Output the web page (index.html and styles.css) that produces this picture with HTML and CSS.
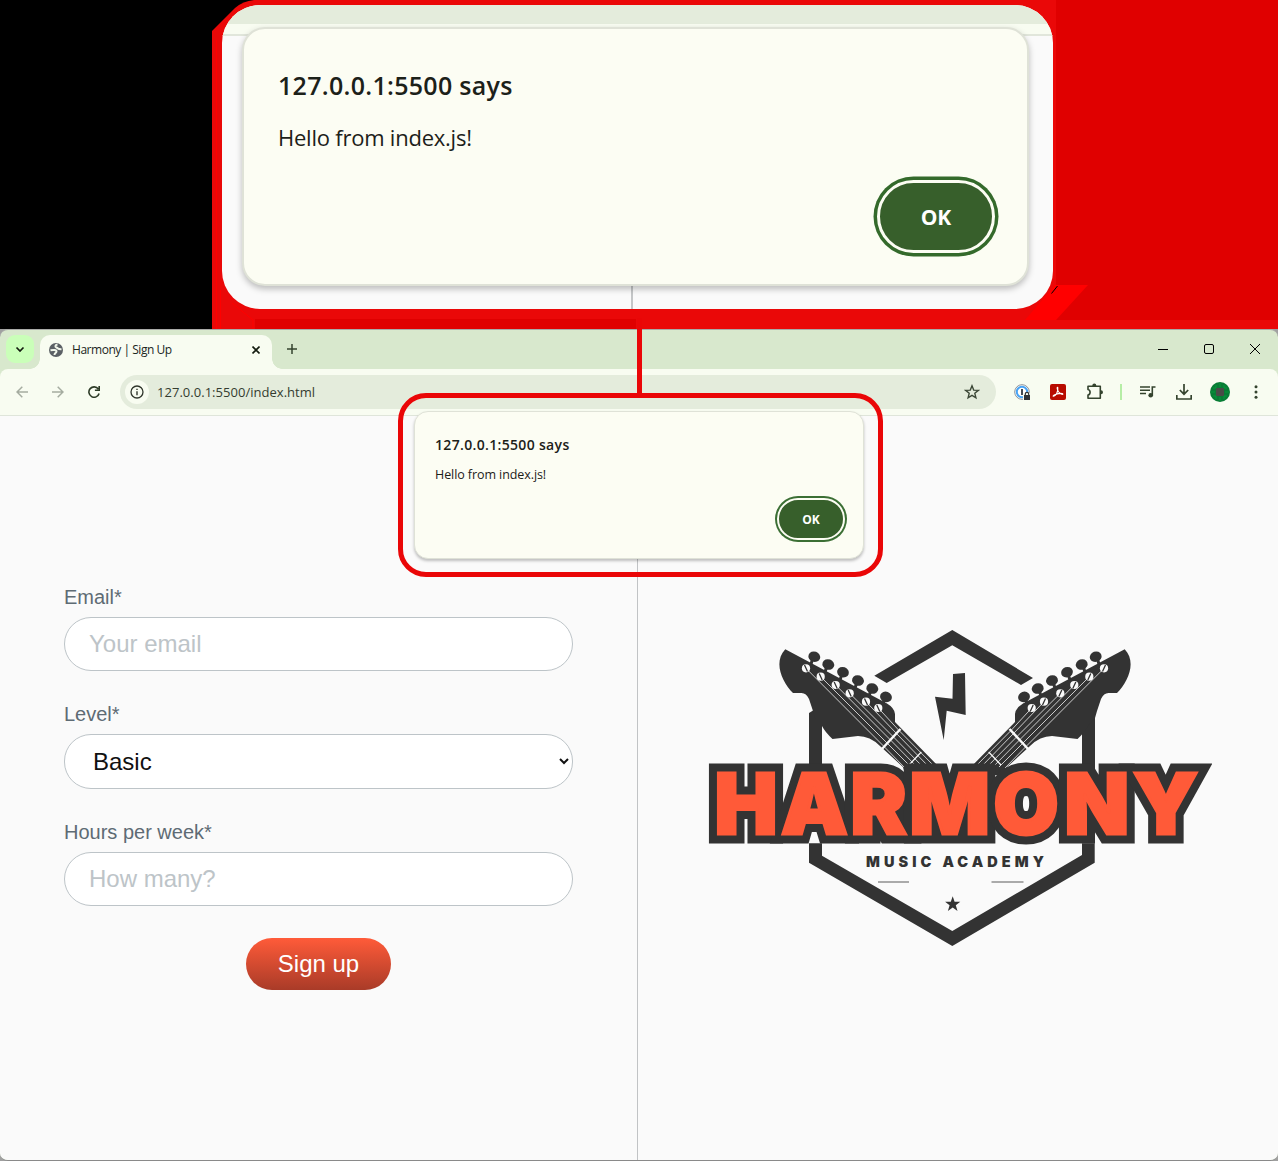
FILE: index.html
```html
<!DOCTYPE html>
<html lang="en">
<head>
<meta charset="utf-8">
<title>Harmony | Sign Up</title>
<link rel="stylesheet" href="styles.css">
</head>
<body>
<div class="page">
  <section class="stage">
    <svg class="backdrop" width="1278" height="329" viewBox="0 0 1278 329">
      <path fill="#000" d="M0 0H1278V329H0z"/>
      <path fill="#ea0808" d="M212 329V31L235 8Q243 1 254 0H1278V329z"/>
      <path fill="#e00000" d="M1056 0H1278V320H1056zM255 319H636V329H255z"/>
      <path fill="#ff0000" d="M1055 285H1088L1056 320H1025z"/>
      <path stroke="#f00" fill="none" d="M216.500 40V329M220.500 290V329M232 303L253 320V329"/>
      <path stroke="#000" fill="none" d="M1051.500 293.500L1057.500 286"/>
    </svg>
    <div class="magnified">
      <div class="mag-omnibox"></div>
      <div class="mag-toolbar"></div>
      <div class="mag-divider"></div>
      <div class="dialog dialog-large">
        <h2 class="dialog-title"><span>127.0.0.1:5500 says</span></h2>
        <p class="dialog-text">Hello from index.js!</p>
        <button class="ok">OK</button>
      </div>
    </div>
  </section>

  <section class="browser">
    <header class="tabstrip">
      <div class="tab-search">
        <svg width="28" height="28" viewBox="0 0 28 28"><path d="M10.500 12.500L14 16L17.500 12.500" fill="none" stroke="#141c10" stroke-width="1.700"/></svg>
      </div>
      <div class="tab">
        <svg width="14" height="14" viewBox="0 0 14 14"><circle cx="7" cy="7" r="7" fill="#5b6065"/><path d="M8.500 1.500C6 2 5.800 3.800 7.500 4.500C9 5 8.500 6.500 12.500 6.300M1.500 7.300C4 6.800 7.500 6.800 7.500 8.600C7.500 10 5.300 9.800 5.500 12" fill="none" stroke="#f0f5ea" stroke-width="2"/></svg>
        <span class="tab-title">Harmony | Sign Up</span>
        <svg class="tab-close" width="8" height="8" viewBox="0 0 8 8"><path d="M.5.5L7.500 7.500M7.500.5L.5 7.500" stroke="#141c10" stroke-width="1.600"/></svg>
      </div>
      <svg class="new-tab" width="10" height="10" viewBox="0 0 10 10"><path d="M5 0V10M0 5H10" stroke="#34432e" stroke-width="1.500"/></svg>
      <div class="window-controls">
        <svg width="10" height="10" viewBox="0 0 10 10"><path d="M0 5.500H10" stroke="#000"/></svg>
        <svg width="10" height="10" viewBox="0 0 10 10"><rect x=".5" y=".5" width="9" height="9" rx="1.500" fill="none" stroke="#000"/></svg>
        <svg width="10" height="10" viewBox="0 0 10 10"><path d="M0 0L10 10M10 0L0 10" stroke="#000"/></svg>
      </div>
    </header>

    <nav class="toolbar">
      <svg class="nav-icon" width="12" height="12" viewBox="0 0 12 12"><path d="M12 6H1M6.300.7L1 6L6.300 11.300" fill="none" stroke="#a5aca0" stroke-width="1.500"/></svg>
      <svg class="nav-icon" width="12" height="12" viewBox="0 0 12 12"><path d="M0 6H11M5.700.7L11 6L5.700 11.300" fill="none" stroke="#a5aca0" stroke-width="1.500"/></svg>
      <svg class="nav-icon" width="12" height="12" viewBox="0 0 12 12"><path d="M10.300 3A5.200 5.200 0 1 0 11.100 7.500M11.200 0V4.300H6.900" fill="none" stroke="#2d3b27" stroke-width="1.600"/></svg>
      <div class="omnibox">
        <div class="site-info">
          <svg width="14" height="14" viewBox="0 0 14 14"><circle cx="7" cy="7" r="6" fill="none" stroke="#30362c" stroke-width="1.300"/><path d="M7 6.200V10.300M7 3.700V5.100" stroke="#30362c" stroke-width="1.400"/></svg>
        </div>
        <span class="url">127.0.0.1:5500/index.html</span>
        <svg class="star" width="16" height="16" viewBox="0 0 16 16"><path d="M8 1.800L9.700 6.100L14.300 6.400L10.800 9.300L11.900 13.800L8 11.300L4.100 13.800L5.200 9.300L1.700 6.400L6.300 6.100z" fill="none" stroke="#3c4837" stroke-width="1.400"/></svg>
      </div>
      <div class="extensions">
        <svg class="ext" width="16" height="16" viewBox="0 0 16 16"><circle cx="8" cy="8" r="7.300" fill="#fff" stroke="#8c9197" stroke-width="1"/><circle cx="8" cy="8" r="5.200" fill="#fff" stroke="#49a4f5" stroke-width="2"/><path d="M8 5V11" stroke="#444b55" stroke-width="2"/><path d="M9 9H16V16H9z" fill="#f8fcf1"/><path d="M10 11H16V16H10z" fill="#303338"/><path d="M11.300 11.500V10A1.700 1.700 0 0 1 14.700 10V11.500" fill="none" stroke="#303338" stroke-width="1.200"/></svg>
        <svg class="ext" width="16" height="16" viewBox="0 0 16 16"><rect width="16" height="16" rx="2" fill="#b80b00"/><path d="M3.500 12.300C5.500 12 8.500 8 7.800 3.500C7.300 2.600 6.800 4 7.600 6C8.600 8.500 11 10.600 12.800 10.300C13.300 9.200 8.500 8.600 4.300 10.900C3.300 11.500 2.800 12.400 3.500 12.300z" fill="none" stroke="#fff" stroke-width="1.100"/></svg>
        <svg class="puzzle" width="18" height="18" viewBox="0 0 18 18"><path d="M2 3.200H14.300V15.300H2V12C4.800 11.500 4.800 7 2 6.500z" fill="none" stroke="#34432e" stroke-width="1.600" stroke-linejoin="round"/><path d="M6.300 3.200V2.500A2 2 0 0 1 10.300 2.500V3.200zM14.300 7.200H15A2 2 0 0 1 15 11.200H14.300z" fill="#34432e"/></svg>
        <i class="separator"></i>
        <svg class="ext" width="16" height="14" viewBox="0 0 16 14"><path d="M0 2H10M0 5.300H10M0 8.600H6" stroke="#34432e" stroke-width="1.500"/><path d="M12.300 10V2H15.500" fill="none" stroke="#34432e" stroke-width="1.600"/><circle cx="10.700" cy="10.200" r="2.300" fill="#34432e"/></svg>
        <svg class="download" width="16" height="16" viewBox="0 0 16 16"><path d="M8 0V10M3.800 6L8 10.200L12.200 6M.8 11V15H15.200V11" fill="none" stroke="#34432e" stroke-width="1.700"/></svg>
        <svg class="avatar" width="20" height="20" viewBox="0 0 20 20"><circle cx="10" cy="10" r="10" fill="#087c35"/><path d="M3 6H6V3M14 3V6H17M3 14H6V17M14 17V14H17M10 1V5M10 15V19M1 10H5M15 10H19" fill="none" stroke="#07963c"/><rect x="6" y="6" width="8" height="8" rx="1" fill="#494b47"/></svg>
        <svg width="4" height="14" viewBox="0 0 4 14" fill="#34432e"><circle cx="2" cy="1.700" r="1.500"/><circle cx="2" cy="7" r="1.500"/><circle cx="2" cy="12.300" r="1.500"/></svg>
      </div>
    </nav>

    <main class="content">
      <form class="signup">
        <label class="field">Email*<input class="control" type="text" placeholder="Your email"></label>
        <label class="field">Level*<select class="control select"><option>Basic</option></select></label>
        <label class="field">Hours per week*<input class="control" type="text" placeholder="How many?"></label>
        <button class="submit" type="button">Sign up</button>
      </form>
      <div class="brand">
        <svg class="logo" width="504" height="320" viewBox="708 628 504 320">
          <g fill="#333">
            <path d="M952.300 630L874.300 675.700L886.700 683L952.300 645.300L1021 685L1033 678z"/>
            <path d="M809 713L813 710.500H822V766H809zM1082 710.500H1095V770H1082z"/>
            <path d="M809 843.300V862.700L952.300 946L1094.700 862.700V843.300H1082V855L952.300 931L822 855.700V843.300z"/>
            <path d="M935 696.700L952.500 698.700L953 674L965 673L965.700 715L946.700 710.700L943.700 740z"/>
            <path d="M952.700 896.300L954.600 901.700H960.300L955.800 905.200L957.500 911L952.700 907.600L947.900 911L949.600 905.200L945.100 901.700H950.800z"/>
          </g>
          <path d="M878 882H909M991.500 882H1023.500" stroke="#aaa" stroke-width="2"/>
          <g id="guitar">
            <path fill="#333" d="M785.300 649.300L887 703.500Q894.500 708 895 714V722L940 768V775H905L903 767L880 746Q870 736 858 736L832.500 739Q825 732 822 726L815 718L813 711L809 699Q806 692 800 693H793C782 682 773 662 785.300 649.300z"/>
            <g fill="#333">
              <ellipse cx="814.300" cy="656.700" rx="6" ry="5.200" transform="rotate(20 814.300 656.700)"/>
              <ellipse cx="828.300" cy="664.500" rx="6" ry="5.200" transform="rotate(20 828.300 664.500)"/>
              <ellipse cx="843" cy="672.200" rx="6" ry="5.200" transform="rotate(20 843 672.200)"/>
              <ellipse cx="858" cy="680.500" rx="6" ry="5.200" transform="rotate(20 858 680.500)"/>
              <ellipse cx="872.300" cy="688.500" rx="6" ry="5.200" transform="rotate(20 872.300 688.500)"/>
              <ellipse cx="886" cy="696.900" rx="6" ry="5.200" transform="rotate(20 886 696.900)"/>
            </g>
            <path stroke="#333" stroke-width="3" d="M813 658L811 664M827 666L825 672M842 674L840 680M857 682L855 688M871 690L869 696M885 698L883 704"/>
            <path fill="none" stroke="#ddd" stroke-width=".9" d="M806 668.300L884.500 747L905 768M820.700 676.700L887.500 743.500L911 767M835.700 685L890.500 740L917 767M849.700 693.300L893.500 737L923 767M866 701.700L896.500 733.500L929 767M878.300 708L899 730.500L935 767"/>
            <path stroke="#fafafa" stroke-width="2.500" d="M900.500 729L881 750"/>
            <path stroke="#fafafa" stroke-width="1.300" d="M921.300 752L909 765"/>
            <g fill="#fafafa">
              <circle cx="806" cy="668.300" r="4.100"/><circle cx="820.700" cy="676.700" r="4.100"/><circle cx="835.700" cy="685" r="4.100"/><circle cx="849.700" cy="693.300" r="4.100"/><circle cx="866" cy="701.700" r="4.100"/><circle cx="878.300" cy="708" r="4.100"/>
            </g>
            <path stroke="#333" stroke-width="1.300" d="M804.500 665L807.500 671.500M819.200 673.500L822.200 680M834.200 682L837.200 688.500M848.200 690L851.200 696.500M864.500 698.500L867.500 705M876.800 705L879.800 711.500"/>
          </g>
          <use href="#guitar" transform="translate(1910 0) scale(-1 1)"/>
          <use href="#wordmark" class="outline"/>
          <g class="face">
            <text id="wordmark" class="wordmark" x="714.500 781 850.500 909.500 993.500 1064.500 1133" y="834">HARMONY</text>
          </g>
          <text class="tagline" x="866" y="866.500" textLength="178" lengthAdjust="spacing">MUSIC ACADEMY</text>
        </svg>
      </div>
    </main>
  </section>

  <div class="connector"></div>
  <div class="highlight"></div>
  <div class="dialog dialog-small">
    <h2 class="dialog-title"><span>127.0.0.1:5500 says</span></h2>
    <p class="dialog-text">Hello from index.js!</p>
    <button class="ok">OK</button>
  </div>
</div>
</body>
</html>
```

FILE: styles.css
```css
* { box-sizing: border-box; }
body { margin: 0; font-family: "Open Sans", "Noto Sans", sans-serif; }
svg { display: block; flex: none; }
.page { position: relative; width: 1278px; height: 1161px; overflow: hidden; background: #a0a0a0; }

/* Magnified view */
.stage { position: relative; height: 329px; padding: 5px 225px 0 222px; }
.backdrop { position: absolute; left: 0; top: 0; }
.magnified { position: relative; height: 304px; border-radius: 38px; overflow: hidden; background: #fafafa; }
.mag-omnibox { height: 19px; background: #e4ecdc; }
.mag-toolbar { height: 12px; background: #f8fcf1; border-bottom: 2px solid #e1e6db; }
.mag-divider { position: absolute; left: 409px; bottom: 0; width: 2px; height: 30px; background: #c4c6c7; }

/* Alert dialogs */
.dialog { position: absolute; display: flex; flex-direction: column; background: #fcfdf3; color: #1c2119; }
.dialog-title, .dialog-text { margin: 0; white-space: nowrap; }
.dialog-title { font-weight: 600; }
.ok { align-self: flex-end; padding: 0; font-family: inherit; font-weight: 700; color: #fff; background: #375f2b; border-style: solid; border-color: #fcfdf3; }
.dialog-large { left: 20px; top: 22px; width: 787px; height: 259px; padding: 38px 32px 0 34px; border: 2px solid #dfe2d7; border-radius: 23px; box-shadow: 0 3px 6px rgba(0,0,0,.25); }
.dialog-large .dialog-title { font-size: 25px; line-height: 36px; letter-spacing: .3px; }
.dialog-large .dialog-text { margin-top: 18px; font-size: 22px; line-height: 32px; letter-spacing: -.23px; }
.dialog-large .ok { width: 118px; height: 73px; margin-top: 27px; border-width: 3px; border-radius: 37px; font-size: 21px; box-shadow: 0 0 0 3.500px #346a2b; }
.dialog-small { left: 414px; top: 411px; width: 450px; height: 148px; padding: 22px 18px 0 20px; border: 1px solid #dfe2d7; border-radius: 14px; box-shadow: 0 2px 3px rgba(0,0,0,.24); }
.dialog-small .dialog-title { font-size: 14px; line-height: 22px; letter-spacing: .33px; }
.dialog-small .dialog-text { margin-top: 10px; font-size: 12.500px; line-height: 18px; letter-spacing: -.08px; }
.dialog-small .ok { width: 68px; height: 42px; margin-top: 14px; border-width: 2px; border-radius: 21px; font-size: 12px; box-shadow: 0 0 0 2px #3b6f34; }
.highlight { position: absolute; left: 398px; top: 393px; width: 485px; height: 184px; border: 5px solid #ea0607; border-radius: 28px; }
.connector { position: absolute; left: 637px; top: 318px; width: 5px; height: 77px; background: #ea0607; }

/* Browser window */
.browser { height: 832px; border-top: 1px solid #a9aaa8; border-bottom: 1px solid #8a8a8a; border-radius: 8px; overflow: hidden; background: #d8e8cd; }
.tabstrip { display: flex; height: 39px; padding: 5px 18px 0 6px; }
.tab-search { width: 28px; height: 28px; border-radius: 9px; background: #caffb9; }
.tab { position: relative; display: flex; width: 232px; height: 34px; margin-left: 6px; padding: 0 12px 5px 9px; align-items: center; gap: 9px; border-radius: 10px 10px 0 0; background: #f8fcf1; }
.tab::before, .tab::after { content: ""; position: absolute; bottom: 0; width: 10px; height: 10px; }
.tab::before { right: 100%; background: radial-gradient(circle at 0 0, transparent 9.500px, #f8fcf1 10px); }
.tab::after { left: 100%; background: radial-gradient(circle at 100% 0, transparent 9.500px, #f8fcf1 10px); }
.tab-title { font-size: 12px; letter-spacing: -.47px; color: #20261d; white-space: nowrap; }
.tab-close { margin-left: auto; }
.new-tab { margin: 9px 0 0 15px; }
.window-controls { display: flex; gap: 36px; margin: 9px 0 0 auto; }
.toolbar { display: flex; align-items: center; height: 47px; padding: 0 20px 0 16px; background: #f8fcf1; border-bottom: 1px solid #dfe5da; border-radius: 8px 8px 0 0; }
.nav-icon { margin-right: 24px; }
.nav-icon:nth-child(3) { margin-right: 20px; }
.omnibox { display: flex; align-items: center; width: 876px; height: 34px; padding: 0 16px 0 5px; border-radius: 17px; background: #e4ecdc; }
.site-info { display: grid; place-items: center; width: 24px; height: 24px; border-radius: 50%; background: #f8fcf1; }
.url { margin-left: 8px; font-size: 13px; letter-spacing: .03px; color: #343c30; }
.star { margin-left: auto; }
.extensions { display: flex; flex: 1; align-items: center; padding-left: 18px; }
.ext { margin-right: 20px; }
.puzzle { margin-right: 16px; }
.download { margin-right: 18px; }
.avatar { margin-right: 24px; }
.separator { width: 2px; height: 16px; margin-right: 18px; background: #b6eda6; }

/* Sign-up page */
.content { display: grid; grid-template-columns: 638px 640px; height: 744px; background: #fafafa; font-family: "Liberation Sans", Arial, sans-serif; }
.signup { display: flex; flex-direction: column; gap: 32px; padding: 170px 64px 0; border-right: 1px solid #c1c3c5; }
.field { display: flex; flex-direction: column; gap: 8px; font-size: 20px; line-height: 23px; color: #5e6b74; }
.control { width: 509px; height: 54px; padding: 0 24px; border: 1px solid #bdc4c8; border-radius: 27px; background: #fff; color: #111; font-family: inherit; font-size: 24px; }
.control::placeholder { color: #bdc4c8; }
.select { height: 55px; padding-right: 0; }
.submit { align-self: center; width: 145px; height: 52px; border: 0; border-radius: 26px; background: linear-gradient(#ff5b39, #a93b28); color: #fff; font-family: inherit; font-size: 24px; }
.brand { padding: 212px 0 0 70px; }
.wordmark { font-family: Inter, sans-serif; font-weight: 900; font-size: 84px; stroke-miterlimit: 4; }
.outline { fill: #333; stroke: #333; stroke-width: 19px; }
.face { fill: #ff5a38; stroke: #ff5a38; stroke-width: 3px; }
.tagline { font-family: Inter, sans-serif; font-weight: 900; font-size: 14.500px; fill: #333; }
```
